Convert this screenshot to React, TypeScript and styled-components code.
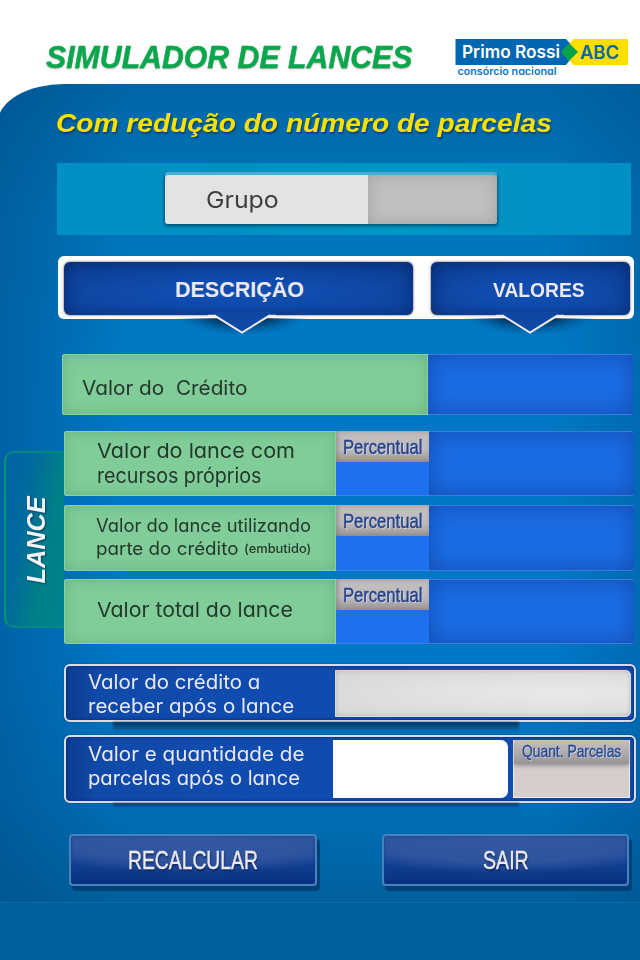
import React, { useLayoutEffect, useRef, useState } from "react";
import styled, { createGlobalStyle, css } from "styled-components";

const geometric = `Inter, "Open Sans", sans-serif`;
const grotesque = `"Liberation Sans", Arial, sans-serif`;

const GlobalStyle = createGlobalStyle`
  * { box-sizing: border-box; }
  body { margin: 0; background: #fff; }
`;

/* ---------- text ---------- */

type Face = "geometric" | "grotesque";

const Line = styled.div<{ $width: number; $height: number }>`
  flex: none;
  width: ${(p) => p.$width}px;
  height: ${(p) => p.$height}px;
  line-height: ${(p) => p.$height}px;
`;

const Glyphs = styled.span<{
  $size: number;
  $face: Face;
  $weight: number;
  $italic?: boolean;
  $color: string;
  $shadow?: string;
  $stroke: number;
}>`
  display: inline-block;
  vertical-align: top;
  white-space: pre;
  transform-origin: 0 50%;
  font-family: ${(p) => (p.$face === "geometric" ? geometric : grotesque)};
  font-feature-settings: "cv11";
  font-size: ${(p) => p.$size}px;
  font-weight: ${(p) => p.$weight};
  font-style: ${(p) => (p.$italic ? "italic" : "normal")};
  color: ${(p) => p.$color};
  text-shadow: ${(p) => p.$shadow ?? "none"};
  -webkit-text-stroke: ${(p) => p.$stroke}px ${(p) => p.$color};
`;

interface FitTextProps {
  children: string;
  width: number;
  height: number;
  size: number;
  face?: Face;
  weight?: number;
  italic?: boolean;
  color?: string;
  shadow?: string;
  stroke?: number;
}

/* Condenses or widens one line so that it fills the given width. */
function FitText({
  children,
  width,
  height,
  size,
  face = "geometric",
  weight = 400,
  italic,
  color = "#24382c",
  shadow,
  stroke = 0,
}: FitTextProps) {
  const ref = useRef<HTMLSpanElement>(null);
  const [scale, setScale] = useState(1);
  useLayoutEffect(() => {
    if (ref.current) setScale(width / ref.current.offsetWidth);
  }, [children, width]);
  return (
    <Line $width={width} $height={height}>
      <Glyphs
        ref={ref}
        $size={size}
        $face={face}
        $weight={weight}
        $italic={italic}
        $color={color}
        $shadow={shadow}
        $stroke={stroke}
        style={{ transform: `scaleX(${scale})` }}
      >
        {children}
      </Glyphs>
    </Line>
  );
}

/* ---------- frame ---------- */

const Page = styled.div`
  width: 640px;
  height: 960px;
  overflow: hidden;
  display: flex;
  flex-direction: column;
  background: #fff;
`;

const Header = styled.header`
  height: 84px;
  flex: none;
  display: flex;
  justify-content: space-between;
  padding: 38px 12px 0 46px;
`;

const Logo = styled.svg`
  display: block;
  width: 174px;
  height: 40px;
  font-family: ${geometric};
  font-weight: 600;
  font-feature-settings: "cv11";
`;

const Panel = styled.main`
  height: 818px;
  flex: none;
  margin-left: -2px;
  padding: 21px 0 0 2px;
  border-top-left-radius: 66px 38px;
  background:
    linear-gradient(90deg, rgba(0, 70, 125, 0.45) 0, rgba(0, 70, 125, 0) 130px),
    linear-gradient(270deg, rgba(0, 70, 130, 0.28) 0, rgba(0, 70, 130, 0) 90px),
    linear-gradient(#0065a6 0, #006eb0 60px, #0075bb 130px, #0078c4 260px, #0078c8 590px, #006fb7 720px, #00619d 818px);
`;

const Footer = styled.footer`
  flex: 1;
  background: #00609e;
  border-top: 1px solid #0f68a4;
`;

const Subtitle = styled.div`
  padding: 1px 0 0 56px;
`;

/* ---------- group field ---------- */

const GroupStrip = styled.div`
  margin: 22px 9px 0 57px;
  height: 72px;
  padding: 12px 0 0 108px;
  background: linear-gradient(90deg, #0090c6, #0090c0 30%, #0096c2 60%, #008fc6);
`;

const GroupField = styled.div`
  display: flex;
  width: 332px;
  height: 49px;
  border-radius: 3px;
  overflow: hidden;
  box-shadow: 0 -3px 0 #47acd6, 0 1px 3px 1px rgba(0, 60, 90, 0.75);
`;

const GroupLabel = styled.div`
  width: 203px;
  padding-left: 41px;
  display: flex;
  align-items: center;
  background: #e3e3e3;
`;

const GroupValue = styled.div`
  flex: 1;
  background: #c0bfbd;
  box-shadow: inset 0 0 14px rgba(110, 110, 110, 0.35);
`;

/* ---------- column heads ---------- */

const Heads = styled.div`
  display: flex;
  gap: 18px;
  width: 576px;
  height: 63px;
  margin: 21px 0 0 58px;
  padding: 6px 4px 4px 6px;
  border-radius: 6px;
  background: #fff;
`;

const Head = styled.div<{ $width: number; $indent: number }>`
  position: relative;
  display: flex;
  align-items: center;
  width: ${(p) => p.$width}px;
  height: 53px;
  padding: 2px 0 0 ${(p) => p.$indent}px;
  border-radius: 6px;
  background: radial-gradient(ellipse at 50% 90%, #1150b4 0, #104cad 45%, #0d3f96 100%);
  box-shadow: 0 0 2px 1px #b5aeb0, inset 0 0 16px 2px rgba(3, 30, 90, 0.6);
`;

const Pointer = styled.svg<{ $x: number }>`
  position: absolute;
  left: ${(p) => p.$x}px;
  top: 49px;
  width: 156px;
  height: 32px;
`;

function HeadPointer({ x, id }: { x: number; id: string }) {
  return (
    <Pointer $x={x} viewBox="0 0 156 32">
      <defs>
        <radialGradient id={id} gradientUnits="userSpaceOnUse" cx="78" cy="0" r="70" gradientTransform="scale(1 0.36)">
          <stop offset="0" stopColor="#00101f" stopOpacity="0.95" />
          <stop offset="0.45" stopColor="#001c38" stopOpacity="0.8" />
          <stop offset="1" stopColor="#0060a0" stopOpacity="0" />
        </radialGradient>
      </defs>
      <path d="M8 7H148V32H8Z" fill={`url(#${id})`} />
      <path d="M50 1H106V4L78 21.5L50 4Z" fill="#0f48a4" />
      <path d="M44 4.8H51L78 21.6L105 4.8H112" fill="none" stroke="#eeeaec" strokeWidth="2" />
    </Pointer>
  );
}

/* ---------- value rows ---------- */

const Row = styled.div<{ $height: number }>`
  display: flex;
  height: ${(p) => p.$height}px;
  flex: none;
`;

const Description = styled.div<{ $width: number; $top: number; $left: number }>`
  width: ${(p) => p.$width}px;
  padding: ${(p) => p.$top}px 0 0 ${(p) => p.$left}px;
  border-radius: 3px 0 0 3px;
  background: #80cd99;
  box-shadow: inset 0 0 0 1px #85d3a0, inset 0 0 14px rgba(70, 130, 90, 0.42);
`;

const Value = styled.div`
  width: 205px;
  border-radius: 0 3px 3px 0;
  background: #1b6ce4;
  border: solid #3c7cd8;
  border-width: 1px 0;
  box-shadow: inset 0 0 22px rgba(18, 66, 160, 0.8);
`;

const CreditRow = styled(Row)`
  margin: 35px 0 0 62px;
`;

const LanceGroup = styled.section`
  display: flex;
  margin: 16px 0 0 4px;
`;

const LanceTab = styled.div`
  width: 60px;
  height: 177px;
  margin-top: 20px;
  border: 2px solid #009a69;
  border-right: 0;
  border-top-color: #008a80;
  border-bottom-color: #008a80;
  border-radius: 10px 0 0 10px;
  background: linear-gradient(100deg, #0062a4 0, #006a9d 30%, #008087 68%, #00818c 100%);
  display: flex;
  align-items: center;
  justify-content: center;
`;

const Sideways = styled.div`
  flex: none;
  transform: translate(0, 0) rotate(-90deg);
`;

const LanceRows = styled.div`
  display: flex;
  flex-direction: column;
  gap: 8.5px;
`;

const Percent = styled.div`
  width: 93px;
  display: flex;
  flex-direction: column;
  background: #1d70ee;
  border-bottom: 1px solid #4383dc;
`;

const PercentLabel = styled.div`
  height: 31px;
  padding: 1px 0 0 7px;
  background: linear-gradient(#c3bec0 0, #bfbbbd 60%, #9a9696 100%);
  box-shadow: inset 2px 0 5px rgba(120, 115, 120, 0.6);
`;

const TextRow = styled.div`
  display: flex;
  align-items: baseline;
  gap: 6px;
`;

/* ---------- results ---------- */

const frame = css`
  border: 2px solid #dcdbe3;
  border-radius: 6px;
  background: #104caf;
`;

const Result = styled.div<{ $height: number; $gap: number }>`
  ${frame}
  position: relative;
  display: flex;
  width: 572px;
  height: ${(p) => p.$height}px;
  margin: ${(p) => p.$gap}px 0 0 64px;
  padding: 4px 3px 3px 0;
  box-shadow: inset 0 0 3px 1px #0a3386, 0 0 2px rgba(0, 50, 100, 0.5);
  background: linear-gradient(90deg, #0c3c91 0, #104aa9 35px, #104cb0 200px);
`;

const UnderShadow = styled.div<{ $width: number; $height: number }>`
  position: absolute;
  left: 47px;
  top: calc(100% + 2px);
  width: ${(p) => p.$width}px;
  height: ${(p) => p.$height}px;
  background: linear-gradient(rgba(0, 30, 60, 0.8), rgba(0, 60, 110, 0.25) 70%, rgba(0, 80, 140, 0));
  filter: blur(1px);
`;

const ResultText = styled.div<{ $width: number; $top: number }>`
  width: ${(p) => p.$width}px;
  flex: none;
  padding: ${(p) => p.$top}px 0 0 22px;
`;

const CreditOutput = styled.div`
  flex: 1;
  border-radius: 0 6px 6px 0;
  background: radial-gradient(ellipse at 75% 50%, #e9e9e9 0, #e2e2e3 40%, #d7d7d8 90%);
  box-shadow: inset 0 0 5px rgba(150, 150, 150, 0.65), inset 0 0 0 1px #f1f1f1;
`;

const ParcelOutput = styled.div`
  width: 175px;
  height: 58px;
  margin-top: -1px;
  border-radius: 0 7px 7px 0;
  background: #fff;
`;

const ParcelCount = styled.div`
  width: 117px;
  height: 58px;
  margin: -1px 0 0 5px;
  background: #d6cdcd;
  box-shadow: inset 0 0 0 1px #eeeeef;
`;

const ParcelLabel = styled.div`
  height: 24px;
  margin: 0 1px;
  padding-left: 8px;
  background: linear-gradient(#c5bfc0 0, #b5b0b1 40%, #999595 100%);
  box-shadow: 0 2px 4px rgba(110, 105, 110, 0.55);
`;

/* ---------- actions ---------- */

const Actions = styled.div`
  display: flex;
  gap: 65px;
  margin: 31px 0 0 69px;
`;

const Button = styled.button<{ $width: number }>`
  display: flex;
  align-items: center;
  justify-content: center;
  width: ${(p) => p.$width}px;
  height: 52px;
  padding: 0;
  border: 2px solid #4583bd;
  border-radius: 4px;
  background:
    radial-gradient(ellipse 78% 78% at 50% 0, rgba(54, 90, 160, 0.9) 0, rgba(48, 86, 158, 0.9) 70%, rgba(40, 78, 153, 0) 100%),
    linear-gradient(#2a529c 0, #1c479a 35%, #0f3b8c 70%, #0a3584 90%, #062d77 100%);
  box-shadow: 3px 5px 1px #004076, inset 0 0 3px #133c8d;
`;

const softWhite = "#ece8ee";
const paleShadow = "1px 1px 0 rgba(235, 235, 245, 0.7)";

function DescriptionText({ children, width }: { children: string; width: number }) {
  return (
    <FitText width={width} height={25} size={20.5}>
      {children}
    </FitText>
  );
}

function PercentCell() {
  return (
    <Percent>
      <PercentLabel>
        <FitText
          face="grotesque"
          size={21}
          width={79}
          height={29}
          color="#25448b"
          shadow={paleShadow}
          stroke={0.45}
        >
          Percentual
        </FitText>
      </PercentLabel>
    </Percent>
  );
}

function BrandLogo() {
  return (
    <Logo viewBox="0 0 174 40">
      <path d="M1.5 1H112L123 13L112 27H1.5Z" fill="#0068b3" />
      <path d="M119 1H174V27H119L110 14Z" fill="#ffde00" />
      <path d="M115 5L124 14L115 23L107 14Z" fill="#08a24b" />
      <text x="8" y="20" fontSize="17.5" textLength="98" lengthAdjust="spacingAndGlyphs" fill="#fff">
        Primo Rossi
      </text>
      <text x="126" y="21" fontSize="19" textLength="39" lengthAdjust="spacingAndGlyphs" fill="#0068a8">
        ABC
      </text>
      <text x="3.5" y="37" fontSize="10.5" textLength="99" lengthAdjust="spacingAndGlyphs" fill="#1673b4">
        consórcio nacional
      </text>
    </Logo>
  );
}

export default function App() {
  return (
    <Page>
      <GlobalStyle />
      <Header>
        <FitText
          face="grotesque"
          weight={700}
          italic
          size={31}
          width={366}
          height={40}
          color="#07a84c"
          shadow="0 1px 2px rgba(110, 70, 90, 0.5)"
          stroke={0.4}
        >
          SIMULADOR DE LANCES
        </FitText>
        <BrandLogo />
      </Header>

      <Panel>
        <Subtitle>
          <FitText
            face="grotesque"
            weight={700}
            italic
            size={26.5}
            width={496}
            height={35}
            color="#ffe100"
            shadow="1px 2px 2px rgba(0, 40, 70, 0.6)"
          >
            Com redução do número de parcelas
          </FitText>
        </Subtitle>

        <GroupStrip>
          <GroupField>
            <GroupLabel>
              <FitText size={23.5} width={73} height={49} color="#3f3f41">
                Grupo
              </FitText>
            </GroupLabel>
            <GroupValue />
          </GroupField>
        </GroupStrip>

        <Heads>
          <Head $width={349} $indent={111}>
            <HeadPointer x={99.5} id="shade-description" />
            <FitText face="grotesque" weight={700} size={21.5} width={129} height={52} color={softWhite}>
              DESCRIÇÃO
            </FitText>
          </Head>
          <Head $width={199} $indent={62}>
            <HeadPointer x={20.5} id="shade-values" />
            <FitText face="grotesque" weight={700} size={20.5} width={92} height={52} color={softWhite}>
              VALORES
            </FitText>
          </Head>
        </Heads>

        <CreditRow $height={61}>
          <Description $width={366} $top={21.5} $left={20}>
            <FitText width={165} height={25} size={20}>
              {"Valor do  Crédito"}
            </FitText>
          </Description>
          <Value />
        </CreditRow>

        <LanceGroup>
          <LanceTab>
            <Sideways>
              <FitText
                face="grotesque"
                weight={700}
                italic
                size={25}
                width={87}
                height={28}
                color="#f3f3f7"
                shadow="-1px 1px 2px rgba(0, 40, 80, 0.7)"
              >
                LANCE
              </FitText>
            </Sideways>
          </LanceTab>
          <LanceRows>
            <Row $height={65}>
              <Description $width={272} $top={7} $left={33}>
                <DescriptionText width={198}>Valor do lance com</DescriptionText>
                <DescriptionText width={164}>recursos próprios</DescriptionText>
              </Description>
              <PercentCell />
              <Value />
            </Row>
            <Row $height={66}>
              <Description $width={272} $top={9.5} $left={32}>
                <FitText width={215} height={23} size={18}>
                  Valor do lance utilizando
                </FitText>
                <TextRow>
                  <FitText width={142} height={23} size={18}>
                    parte do crédito
                  </FitText>
                  <FitText width={67} height={23} size={12.5} weight={500}>
                    (embutido)
                  </FitText>
                </TextRow>
              </Description>
              <PercentCell />
              <Value />
            </Row>
            <Row $height={65}>
              <Description $width={272} $top={18} $left={33}>
                <DescriptionText width={196}>Valor total do lance</DescriptionText>
              </Description>
              <PercentCell />
              <Value />
            </Row>
          </LanceRows>
        </LanceGroup>

        <Result $height={58} $gap={20}>
          <UnderShadow $width={406} $height={11} />
          <ResultText $width={269} $top={1}>
            <FitText width={172} height={23.5} size={19.5} color={softWhite}>
              Valor do crédito a
            </FitText>
            <FitText width={206} height={23.5} size={19.5} color={softWhite}>
              receber após o lance
            </FitText>
          </ResultText>
          <CreditOutput />
        </Result>

        <Result $height={68} $gap={13}>
          <UnderShadow $width={406} $height={5} />
          <ResultText $width={267} $top={2}>
            <FitText width={217} height={23.5} size={19.5} color={softWhite}>
              Valor e quantidade de
            </FitText>
            <FitText width={212} height={23.5} size={19.5} color={softWhite}>
              parcelas após o lance
            </FitText>
          </ResultText>
          <ParcelOutput />
          <ParcelCount>
            <ParcelLabel>
              <FitText
                face="grotesque"
                size={16.5}
                width={99}
                height={22}
                color="#274b98"
                shadow={paleShadow}
                stroke={0.35}
              >
                Quant. Parcelas
              </FitText>
            </ParcelLabel>
          </ParcelCount>
        </Result>

        <Actions>
          <Button $width={248}>
            <FitText
              face="grotesque"
              size={26}
              width={130}
              height={48}
              color={softWhite}
              shadow="1px 2px 2px rgba(0, 15, 60, 0.6)"
              stroke={0.4}
            >
              RECALCULAR
            </FitText>
          </Button>
          <Button $width={247}>
            <FitText
              face="grotesque"
              size={26}
              width={46}
              height={48}
              color={softWhite}
              shadow="1px 2px 2px rgba(0, 15, 60, 0.6)"
              stroke={0.4}
            >
              SAIR
            </FitText>
          </Button>
        </Actions>
      </Panel>
      <Footer />
    </Page>
  );
}
